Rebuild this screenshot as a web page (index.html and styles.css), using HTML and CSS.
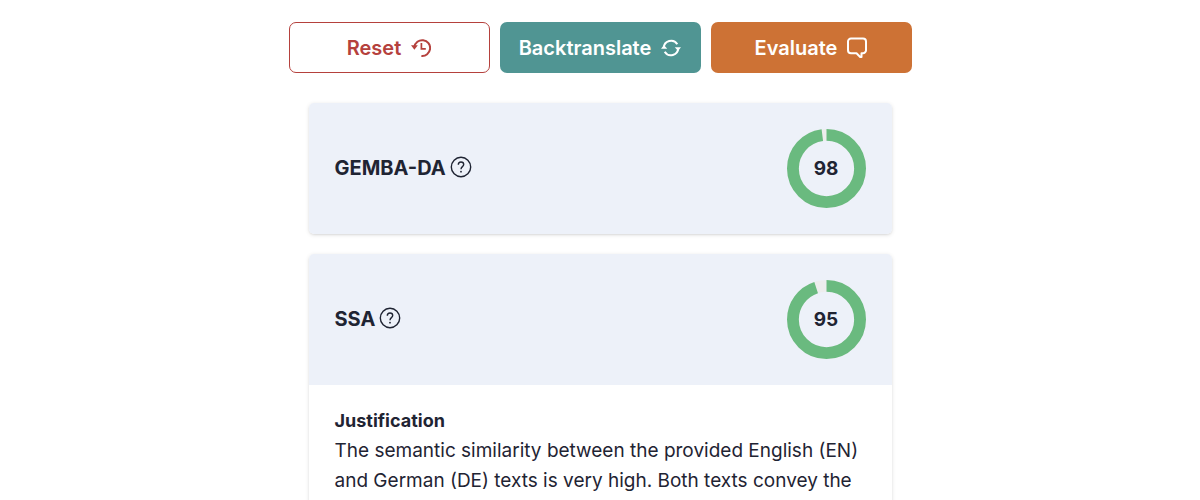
FILE: index.html
```html
<!DOCTYPE html>
<html lang="en">
<head>
  <meta charset="UTF-8">
  <meta name="viewport" content="width=device-width, initial-scale=1">
  <title>Translation evaluation</title>
  <link rel="stylesheet" href="styles.css">
</head>
<body>
  <main class="page">
    <div class="actions">
      <button type="button" class="btn btn-reset">
        Reset
        <svg width="20" height="20" viewBox="0 0 20 20" fill="none" stroke="currentColor" stroke-width="2">
          <path d="M3.400 9A7.900 7.900 0 1 1 10.400 17.900"/>
          <path d="M10.400 5v5.800h4.400" stroke-width="1.700"/>
          <path d="M0 7.200h6.800L3.400 11.800z" fill="currentColor" stroke="none"/>
        </svg>
      </button>
      <button type="button" class="btn btn-back">
        Backtranslate
        <svg width="20" height="20" viewBox="0 0 20 20" fill="none" stroke="currentColor" stroke-width="2">
          <path d="M2.800 10A7.300 7.300 0 0 1 16.300 6.200"/>
          <path d="M17.200 10A7.300 7.300 0 0 1 3.700 13.800"/>
          <path d="M0 10.800L3 7l3.200 3.800z" fill="currentColor" stroke="none"/>
          <path d="M20 9.200L17 13l-3.200-3.800z" fill="currentColor" stroke="none"/>
        </svg>
      </button>
      <button type="button" class="btn btn-evaluate">
        Evaluate
        <svg width="20" height="22" viewBox="0 0 20 22" fill="none" stroke="currentColor" stroke-width="2" stroke-linejoin="round">
          <path d="M4 1.500h12a3 3 0 0 1 3 3v8.700a3 3 0 0 1-3 3h-1.500v3.800h-1.300l-3.700-3.800H4a3 3 0 0 1-3-3V4.500a3 3 0 0 1 3-3z"/>
        </svg>
      </button>
    </div>

    <section class="card">
      <div class="card-header">
        <h2 class="metric">
          GEMBA-DA
          <svg width="22" height="22" viewBox="0 0 22 22" fill="none" stroke="currentColor" stroke-width="1.4">
            <circle cx="11" cy="11" r="9.700"/>
            <path d="M8.300 8.800c0-1.700 1.100-2.800 2.700-2.800s2.700 1 2.700 2.500c0 2.200-2.700 2.100-2.700 4.700"/>
            <circle cx="11" cy="15.700" r=".9" fill="currentColor" stroke="none"/>
          </svg>
        </h2>
        <div class="score">
          <svg class="ring" viewBox="0 0 80 80">
            <circle class="ring-track" cx="40" cy="40" r="34"/>
            <circle class="ring-value" cx="40" cy="40" r="34" pathLength="100" stroke-dasharray="98 2"/>
          </svg>
          <span>98</span>
        </div>
      </div>
    </section>

    <section class="card">
      <div class="card-header">
        <h2 class="metric">
          SSA
          <svg width="22" height="22" viewBox="0 0 22 22" fill="none" stroke="currentColor" stroke-width="1.4">
            <circle cx="11" cy="11" r="9.700"/>
            <path d="M8.300 8.800c0-1.700 1.100-2.800 2.700-2.800s2.700 1 2.700 2.500c0 2.200-2.700 2.100-2.700 4.700"/>
            <circle cx="11" cy="15.700" r=".9" fill="currentColor" stroke="none"/>
          </svg>
        </h2>
        <div class="score">
          <svg class="ring" viewBox="0 0 80 80">
            <circle class="ring-track" cx="40" cy="40" r="34"/>
            <circle class="ring-value" cx="40" cy="40" r="34" pathLength="100" stroke-dasharray="95 5"/>
          </svg>
          <span>95</span>
        </div>
      </div>
      <div class="card-body">
        <h3>Justification</h3>
        <p>The semantic similarity between the provided English (EN) and German (DE) texts is very high. Both texts convey the</p>
      </div>
    </section>
  </main>
</body>
</html>
```
FILE: styles.css
```css
* {
  box-sizing: border-box;
}
body {
  margin: 0;
  height: 100vh;
  overflow: hidden;
  background: #fff;
  color: #1f2433;
  font-family: Inter, sans-serif;
  font-size: 19px;
  line-height: 30px;
}
h2, h3, p {
  margin: 0;
}
.page {
  max-width: 623px;
  margin: 0 auto;
  padding-top: 22px;
}

/* Buttons */
.actions {
  display: flex;
  gap: 10px;
  margin-bottom: 30px;
}
.btn {
  flex: 1;
  display: flex;
  align-items: center;
  justify-content: center;
  gap: 10px;
  height: 51px;
  padding: 0;
  border: 1px solid transparent;
  border-radius: 7px;
  color: #fff;
  font-family: inherit;
  font-size: 20px;
  font-weight: 600;
  cursor: pointer;
}
.btn-reset {
  background: #fff;
  border-color: #b5413d;
  color: #b5413d;
}
.btn-back {
  background: #509593;
}
.btn-evaluate {
  background: #cd7235;
}

/* Cards */
.card {
  margin: 0 20px 20px;
  border-radius: 5px;
  background: #fff;
  overflow: hidden;
  box-shadow: 0 1px 4px rgba(0, 0, 0, 0.12), 0 1px 2px rgba(0, 0, 0, 0.06);
}
.card-header {
  display: flex;
  align-items: center;
  justify-content: space-between;
  padding: 26px;
  background: #edf1f9;
}
.metric {
  display: flex;
  align-items: center;
  gap: 4px;
  padding-bottom: 2px;
  font-size: 20px;
  font-weight: 700;
}
.metric svg {
  margin-bottom: 2px;
}
.card-body {
  padding: 21px 26px;
}
.card-body h3 {
  font-size: 18px;
  font-weight: 700;
}

/* Score ring */
.score {
  display: grid;
  place-items: center;
  width: 79px;
  height: 79px;
  font-weight: 700;
}
.ring, .score span {
  grid-area: 1 / 1;
}
.ring {
  width: 100%;
  transform: rotate(-90deg);
}
.ring circle {
  fill: none;
  stroke-width: 12;
}
.ring .ring-track {
  stroke: #ededed;
}
.ring .ring-value {
  stroke: #6aba7f;
}
```
